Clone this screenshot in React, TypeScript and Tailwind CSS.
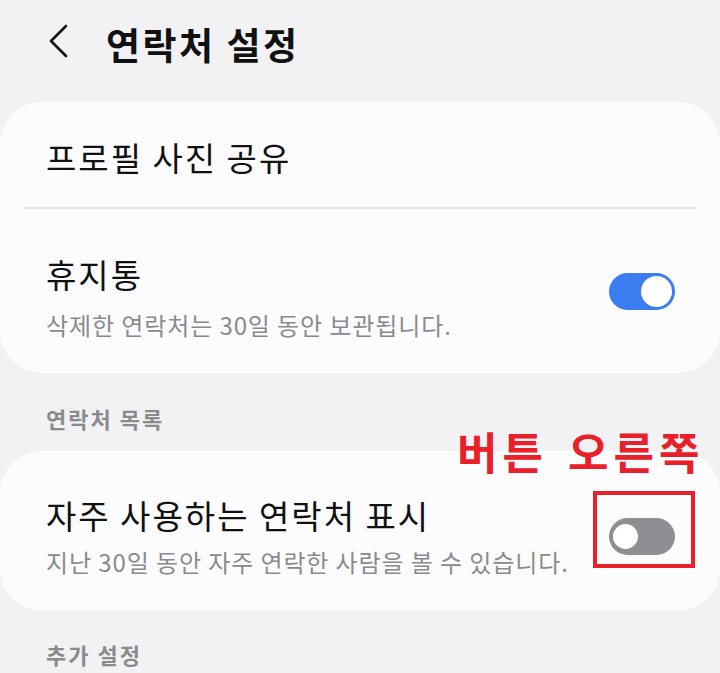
import { useState } from "react";

const font = { fontFamily: '"Noto Sans CJK KR", "Noto Sans", sans-serif' };

function Toggle({ on }: { on: boolean }) {
  return (
    <div
      className={`relative h-[37px] w-[66px] shrink-0 rounded-full ${
        on ? "bg-[#3b7cf0]" : "bg-[#8e8e93]"
      }`}
    >
      <div
        className={`absolute top-[3px] h-[31px] w-[31px] rounded-full bg-white ${
          on ? "right-[3px]" : "left-[1px] border-[3px] border-[#8e8e93]"
        }`}
      />
    </div>
  );
}

export default function App() {
  const [trash] = useState(true);
  const [frequent] = useState(false);

  return (
    <div className="min-h-[673px] w-[720px] overflow-hidden bg-[#f2f2f4]" style={font}>
      {/* top bar */}
      <div className="flex h-[88px] items-center pl-[48px]">
        <svg width="22" height="34" viewBox="0 0 22 34" className="mt-[-6px]">
          <path d="M18 2 L3 17 L18 32" fill="none" stroke="#111" strokeWidth="2.6" strokeLinecap="round" strokeLinejoin="round" />
        </svg>
        <h1 className="ml-[36px] text-[37px] leading-none font-bold tracking-[2.5px] text-[#111]">연락처 설정</h1>
      </div>

      {/* first group */}
      <div className="mt-[14px] rounded-[42px] bg-[#fcfcfe]">
        <div className="flex h-[105px] items-center px-[46px] pt-[4px]">
          <span className="text-[33px] leading-[40px] font-normal tracking-[2px] text-[#111]">프로필 사진 공유</span>
        </div>
        <div className="mx-[23px] h-[2px] bg-[#e8e8ea]" />
        <div className="flex items-center justify-between pr-[45px] pl-[46px] pt-[45px] pb-[33px]">
          <div className="flex flex-col gap-[16px]">
            <span className="text-[33px] leading-[40px] font-normal tracking-[2px] text-[#111]">휴지통</span>
            <span className="text-[24px] leading-[30px] tracking-[0.9px] text-[#8a8a8d]">삭제한 연락처는 30일 동안 보관됩니다.</span>
          </div>
          <div className="mt-[-12px]">
            <Toggle on={trash} />
          </div>
        </div>
      </div>

      <div className="mt-[30px] px-[46px] text-[22px] leading-[30px] font-bold tracking-[2px] text-[#8a8a8d]">연락처 목록</div>

      {/* second group */}
      <div className="relative mt-[18px] rounded-[42px] bg-[#fcfcfe]">
        <div className="flex items-center justify-between pr-[45px] pl-[46px] pt-[44px] pb-[34px]">
          <div className="flex flex-col gap-[12px]">
            <span className="text-[33px] leading-[40px] font-normal tracking-[2px] text-[#111]">자주 사용하는 연락처 표시</span>
            <span className="text-[24px] leading-[30px] tracking-[0.9px] text-[#8a8a8d]">지난 30일 동안 자주 연락한 사람을 볼 수 있습니다.</span>
          </div>
          <Toggle on={frequent} />
        </div>

        {/* red callout */}
        <div className="absolute top-[-26px] left-[457px] flex gap-[20px] text-[44px] leading-[52px] font-bold tracking-[5px] text-[#e8202a]">
          <span>버튼</span>
          <span>오른쪽</span>
        </div>
        <div className="absolute top-[40px] left-[593px] h-[77px] w-[102px] border-[4px] border-[#e8202a]" />
      </div>

      <div className="mt-[28px] px-[46px] text-[22px] leading-[30px] font-bold tracking-[2px] text-[#8a8a8d]">추가 설정</div>
    </div>
  );
}
